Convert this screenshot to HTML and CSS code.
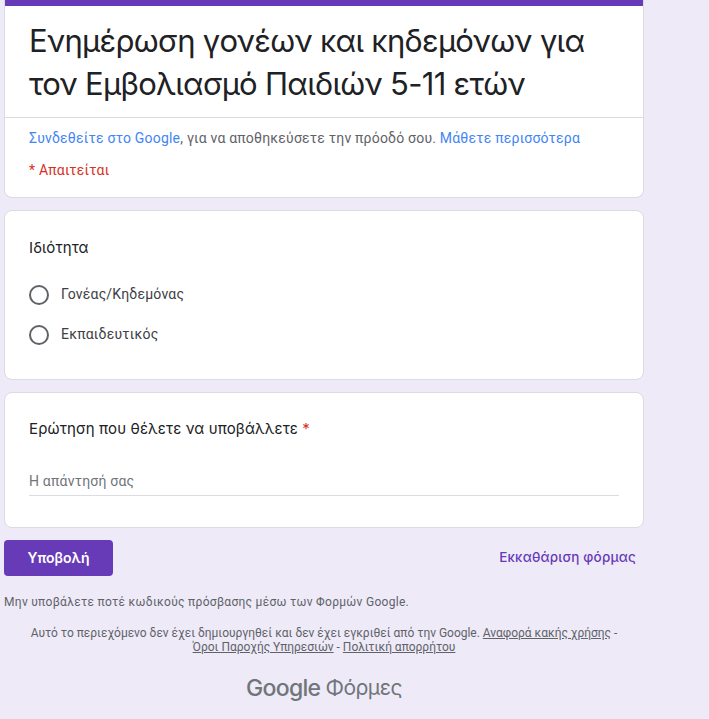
FILE: index.html
```html
<!DOCTYPE html>
<html lang="el">
<head>
<meta charset="utf-8">
<title>Ενημέρωση γονέων και κηδεμόνων</title>
<link rel="stylesheet" href="styles.css">
</head>
<body>
<main class="page">
  <section class="card header-card">
    <div class="accent"></div>
    <h1 class="title">Ενημέρωση γονέων και κηδεμόνων για τον Εμβολιασμό Παιδιών 5-11 ετών</h1>
    <div class="signin">
      <p class="signin-text"><a class="link" href="#">Συνδεθείτε στο Google</a>, για να αποθηκεύσετε την πρόοδό σου. <a class="link" href="#">Μάθετε περισσότερα</a></p>
      <p class="required-note">* Απαιτείται</p>
    </div>
  </section>
  <section class="card question radio-card">
    <h2 class="q-title">Ιδιότητα</h2>
    <div class="options">
      <label class="option"><span class="radio"></span><span class="option-label">Γονέας/Κηδεμόνας</span></label>
      <label class="option"><span class="radio"></span><span class="option-label">Εκπαιδευτικός</span></label>
    </div>
  </section>
  <section class="card question text-card">
    <h2 class="q-title">Ερώτηση που θέλετε να υποβάλλετε <span class="star">*</span></h2>
    <div class="answer">Η απάντησή σας</div>
  </section>
  <div class="actions">
    <button class="submit" type="button">Υποβολή</button>
    <button class="clear" type="button">Εκκαθάριση φόρμας</button>
  </div>
  <p class="warning">Μην υποβάλετε ποτέ κωδικούς πρόσβασης μέσω των Φορμών Google.</p>
  <p class="disclaimer">Αυτό το περιεχόμενο δεν έχει δημιουργηθεί και δεν έχει εγκριθεί από την Google. <a class="foot-link" href="#">Αναφορά κακής χρήσης</a> - <a class="foot-link" href="#">Όροι Παροχής Υπηρεσιών</a> - <a class="foot-link" href="#">Πολιτική απορρήτου</a></p>
  <div class="brand"><span class="brand-google">Google</span> <span class="brand-forms">Φόρμες</span></div>
</main>
</body>
</html>
```
FILE: styles.css
```css
* { box-sizing: border-box; }
html, body { margin: 0; padding: 0; }
body {
  background: #eeeaf8;
  font-family: Roboto, "Noto Sans", sans-serif;
  color: #202124;
  overflow: hidden;
}
.page {
  width: 640px;
  margin-left: 4px;
  display: flex;
  flex-direction: column;
}
.card {
  background: #fff;
  border: 1px solid #dadce0;
  border-radius: 8px;
  margin-bottom: 12px;
}
.header-card {
  height: 198px;
  border-top: 0;
  border-radius: 0 0 8px 8px;
  overflow: hidden;
}
.accent { height: 6px; margin: 0 -1px; background: #673ab7; }
.title {
  margin: 0;
  padding: 13px 24px 0;
  height: 112px;
  border-bottom: 1px solid #dadce0;
  font: 400 31px/43px Inter, sans-serif;
  letter-spacing: -.7px;
  color: #202124;
}
.signin { padding: 10px 24px 0; }
.signin-text { margin: 0; font-size: 14px; line-height: 20px; color: #5f6368; letter-spacing: .2px; }
.link { color: #4285f4; text-decoration: none; }
.required-note { margin: 12px 0 0; font-size: 14px; line-height: 20px; color: #d93025; letter-spacing: .2px; }
.question { padding: 24px; }
.radio-card { height: 170px; padding-top: 25px; }
.text-card { height: 136px; }
.q-title { margin: 0; font: 400 15px/24px Inter, sans-serif; letter-spacing: .12px; color: #202124; }
.star { color: #d93025; }
.options { margin-top: 15px; display: flex; flex-direction: column; }
.option { height: 40px; display: flex; align-items: center; gap: 12px; }
.radio { width: 20px; height: 20px; border: 2px solid #5f6368; border-radius: 50%; }
.option-label { font-size: 14px; letter-spacing: .2px; color: #3c4043; position: relative; top: -1px; }
.answer {
  margin-top: 21px;
  height: 34px;
  padding-top: 9px;
  border-bottom: 1px solid #dadce0;
  font-size: 14px;
  line-height: 20px;
  color: #70757a;
  letter-spacing: .2px;
}
.actions { display: flex; justify-content: space-between; align-items: center; height: 36px; }
.submit {
  width: 109px; height: 36px; border: 0; border-radius: 4px; padding: 0 0 2px;
  background: #673ab7; color: #fff;
  font: 600 14px Inter, sans-serif;
}
.clear {
  border: 0; background: none; padding: 0 8px 2px 0; color: #673ab7;
  font: 500 13.5px Inter, sans-serif;
  letter-spacing: .18px;
}
.warning { margin: 18px 0 0; font-size: 12px; line-height: 16px; color: #5f6368; letter-spacing: .3px; }
.disclaimer { margin: 16px 0 0; padding: 0 20px; font-size: 12px; line-height: 14px; letter-spacing: -.02px; color: #5f6368; text-align: center; }
.foot-link { color: #5f6368; text-decoration: underline; }
.brand { margin-top: 19px; display: flex; justify-content: center; gap: 5px; color: #70757a; }
.brand-google { font: 500 23px/30px Inter, sans-serif; letter-spacing: -.7px; }
.brand-forms { font: 400 21px/30px Inter, sans-serif; letter-spacing: -.5px; }
```
